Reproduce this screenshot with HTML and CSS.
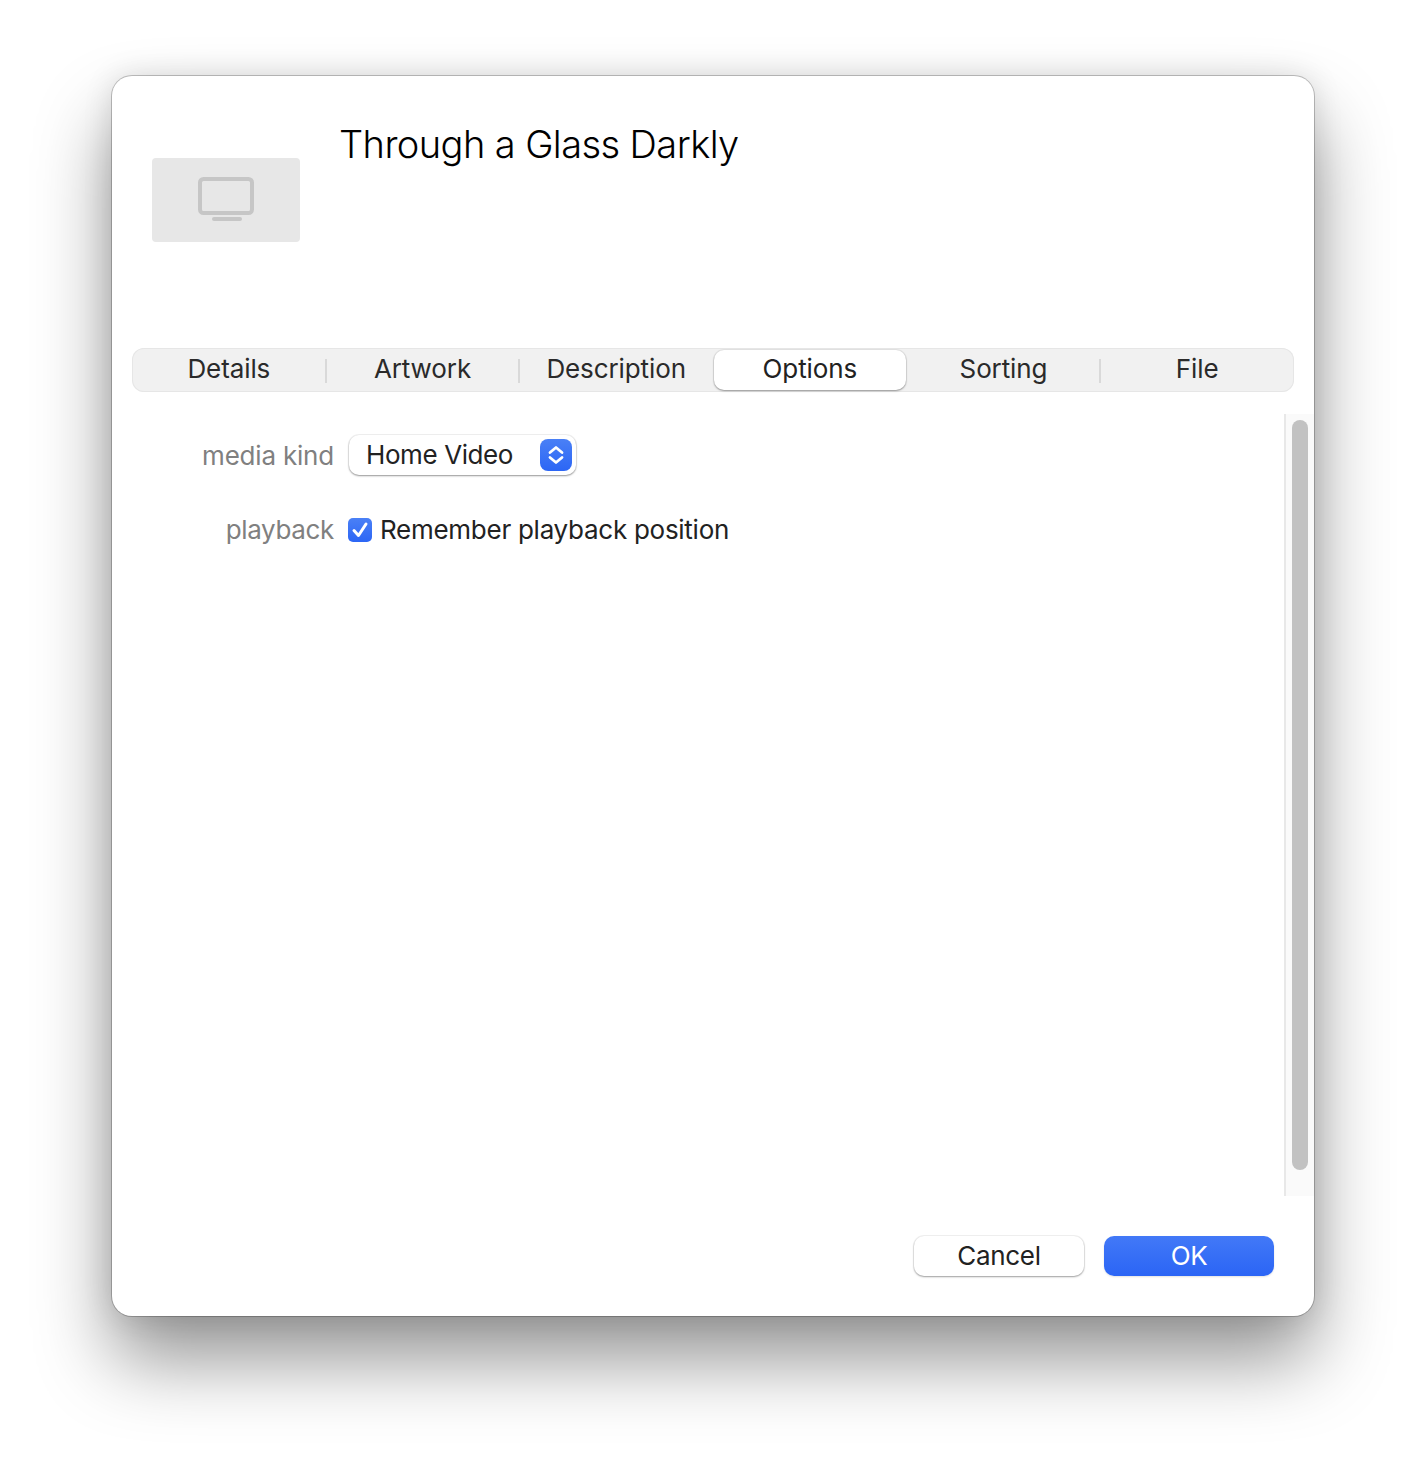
FILE: index.html
```html
<!DOCTYPE html>
<html lang="en">
<head>
    <meta charset="UTF-8">
    <title>Through a Glass Darkly</title>
    <link rel="stylesheet" href="styles.css">
</head>
<body>
    <div class="window">
        <div class="header">
            <div class="artwork">
                <svg width="58" height="46" viewBox="0 0 58 46">
                    <rect x="2" y="2" width="52" height="34" rx="3.5" fill="none" stroke="#c6c6c6" stroke-width="4"/>
                    <rect x="14" y="40" width="30" height="4" rx="2" fill="#c6c6c6"/>
                </svg>
            </div>
            <h1 class="title">Through a Glass Darkly</h1>
        </div>

        <div class="tabs">
            <div class="tab">Details</div>
            <div class="tab sep">Artwork</div>
            <div class="tab sep">Description</div>
            <div class="tab active">Options</div>
            <div class="tab">Sorting</div>
            <div class="tab sep">File</div>
        </div>

        <div class="content">
            <div class="form">
                <div class="row row-kind">
                    <label class="label">media kind</label>
                    <div class="popup">
                        <span class="popup-text">Home Video</span>
                        <span class="popup-arrows">
                            <svg width="20" height="24" viewBox="0 0 20 24">
                                <path d="M4 9.5 L10 4.5 L16 9.5 M4 14.5 L10 19.5 L16 14.5" fill="none" stroke="#fff" stroke-width="2.8" stroke-linecap="round" stroke-linejoin="round"/>
                            </svg>
                        </span>
                    </div>
                </div>
                <div class="row row-playback">
                    <label class="label">playback</label>
                    <span class="checkbox">
                        <svg width="24" height="24" viewBox="0 0 24 24">
                            <path d="M6 12.5 L10.5 17.5 L18 6" fill="none" stroke="#fff" stroke-width="3" stroke-linecap="round" stroke-linejoin="round"/>
                        </svg>
                    </span>
                    <span class="check-text">Remember playback position</span>
                </div>
            </div>
            <div class="scroller"><div class="thumb"></div></div>
        </div>

        <div class="footer">
            <button type="button" class="btn">Cancel</button>
            <button type="button" class="btn primary">OK</button>
        </div>
    </div>
</body>
</html>
```

FILE: styles.css
```css
html, body { margin: 0; padding: 0; background: #fff; }
body { font-family: Inter, "Liberation Sans", sans-serif; height: 1464px; overflow: hidden; padding: 76px 0 0 112px; box-sizing: border-box; }

.window {
    width: 1202px;
    height: 1240px;
    box-sizing: border-box;
    background: #fff;
    border-radius: 20px;
    box-shadow: 0 0 0 1px rgba(0,0,0,.22), 0 44px 76px rgba(0,0,0,.42), 0 0 30px rgba(0,0,0,.12);
    padding-top: 44px;
}

.header { display: flex; height: 228px; padding-left: 40px; }
.artwork {
    width: 148px;
    height: 84px;
    margin-top: 38px;
    background: #e7e7e7;
    border-radius: 4px;
    display: flex;
    align-items: center;
    justify-content: center;
}
.artwork svg { margin-left: 1px; margin-bottom: 1px; }
.title { margin: -1px 0 0 39px; font-size: 38px; font-weight: 300; line-height: 50px; color: #000; letter-spacing: -0.58px; }

.tabs {
    display: grid;
    grid-template-columns: repeat(6, 1fr);
    margin: 0 20px;
    height: 44px;
    box-sizing: border-box;
    background: #f1f1f1;
    border-radius: 12px;
    box-shadow: inset 0 0 0 1px #e6e6e6;
    padding: 2px 0;
}
.tab {
    position: relative;
    font-size: 26px;
    line-height: 38px;
    text-align: center;
    color: #2a2a2a;
    letter-spacing: -0.1px;
}
.tab.sep::before {
    content: "";
    position: absolute;
    left: -1px;
    top: 9px;
    height: 24px;
    width: 2px;
    background: #d9d9d9;
}
.tab.active {
    margin: 0 1px;
    background: #fff;
    border-radius: 10px;
    box-shadow: 0 1px 2px rgba(0,0,0,.35), 0 0 0 1px rgba(0,0,0,.05);
    color: #222;
}

.content { display: flex; margin-top: 22px; height: 782px; }
.form { flex: 1; padding-top: 20px; }
.row { display: flex; align-items: center; }
.row-kind { height: 42px; }
.row-playback { height: 24px; margin-top: 42px; }
.label { width: 222px; margin-right: 15px; text-align: right; font-size: 26px; color: #808080; }
.row-kind .label { padding-top: 1px; letter-spacing: -0.2px; }
.row-playback .label { padding-bottom: 2px; letter-spacing: -0.35px; }

.popup {
    width: 227px;
    height: 40px;
    box-sizing: border-box;
    display: flex;
    align-items: center;
    justify-content: space-between;
    padding: 0 4px 0 17px;
    background: #fff;
    border-radius: 10px;
    box-shadow: 0 1px 2px rgba(0,0,0,.38), 0 0 0 1px rgba(0,0,0,.05);
    font-size: 26px;
    color: #222;
}
.popup-text { padding-bottom: 2px; letter-spacing: -0.4px; }
.popup-arrows {
    width: 32px;
    height: 32px;
    border-radius: 8px;
    background: linear-gradient(#4a80f6, #2c66f5);
    display: flex;
    align-items: center;
    justify-content: center;
}
.checkbox {
    width: 24px;
    height: 24px;
    border-radius: 5px;
    background: linear-gradient(#4a80f6, #2c66f5);
    margin-left: -1px;
    display: block;
}
.checkbox svg { display: block; }
.check-text { margin-left: 8px; padding-bottom: 2px; font-size: 26px; color: #222; letter-spacing: -0.27px; }

.scroller {
    width: 30px;
    box-sizing: border-box;
    background: #fafafa;
    border-left: 2px solid #e8e8e8;
    padding: 6px 6px 26px 6px;
    display: flex;
}
.thumb { width: 16px; height: 750px; background: #c2c2c2; border-radius: 8px; }

.footer { display: flex; justify-content: flex-end; gap: 20px; margin-top: 40px; padding-right: 40px; }
.btn {
    width: 170px;
    height: 40px;
    padding: 0 0 2px;
    border: 0;
    border-radius: 10px;
    background: #fff;
    box-shadow: 0 1px 2px rgba(0,0,0,.35), 0 0 0 1px rgba(0,0,0,.05);
    font-family: inherit;
    font-size: 26px;
    letter-spacing: -0.3px;
    color: #222;
}
.btn.primary {
    background: linear-gradient(#4279f7, #2b65f5);
    color: #fff;
    box-shadow: 0 1px 2px rgba(0,0,0,.12);
}
```
